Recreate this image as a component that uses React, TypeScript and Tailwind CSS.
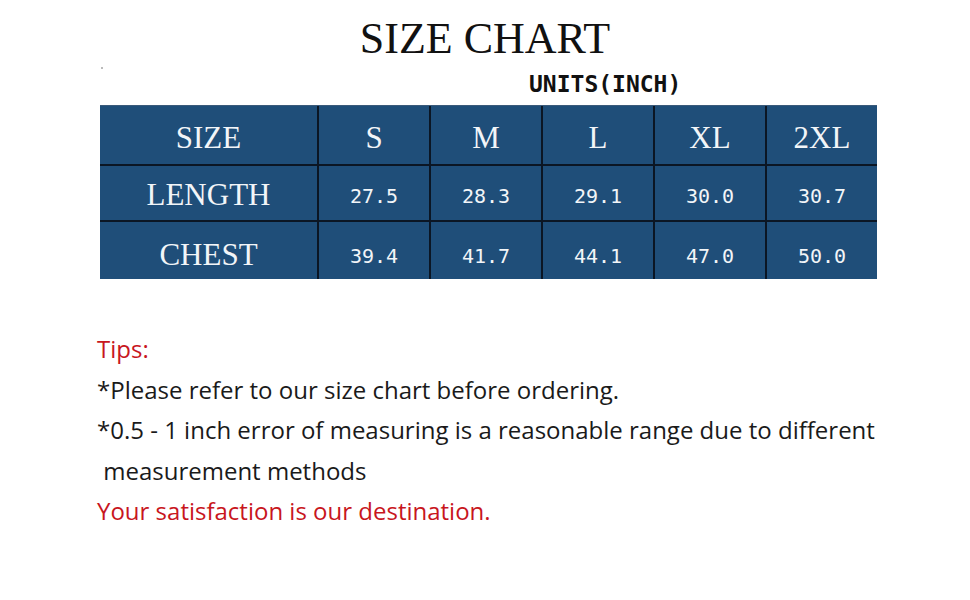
import React from "react";

const serif = { fontFamily: '"Liberation Serif", "Times New Roman", serif' };
const mono = { fontFamily: '"DejaVu Sans Mono", "Liberation Mono", monospace' };
const sans = { fontFamily: '"Open Sans", "Noto Sans", sans-serif' };

const sizes = ["S", "M", "L", "XL", "2XL"];
const length = ["27.5", "28.3", "29.1", "30.0", "30.7"];
const chest = ["39.4", "41.7", "44.1", "47.0", "50.0"];

function Row({
  label,
  values,
  h,
  pt,
  labelClass,
  valueClass,
  valueFont,
}: {
  label: string;
  values: string[];
  h: string;
  pt: string;
  labelClass: string;
  valueClass: string;
  valueFont: React.CSSProperties;
}) {
  return (
    <>
      <div className={`bg-[#1f4e79] flex items-center justify-center text-[#f2f5f8] ${h} ${pt} ${labelClass}`} style={serif}>
        {label}
      </div>
      {values.map((v) => (
        <div
          key={v}
          className={`bg-[#1f4e79] flex items-center justify-center text-[#f2f5f8] ${h} ${pt} ${valueClass}`}
          style={valueFont}
        >
          {v}
        </div>
      ))}
    </>
  );
}

export default function App() {
  return (
    <div className="w-[970px] h-[600px] bg-white overflow-hidden flex flex-col">
      <div className="flex justify-center pt-[14px] h-[70px]">
        <span className="text-[44px] leading-[50px] text-[#111]" style={serif}>
          SIZE CHART
        </span>
      </div>
      <div className="pl-[100px] flex flex-col">
        <div className="flex items-start h-[35px]">
          <span className="w-[2px] h-[2px] bg-[#bbb] mt-[-3px] ml-[1px]" />
          <span className="ml-[426px] text-[23px] leading-[24px] font-bold text-[#111] pt-[2px]" style={mono}>
            UNITS(INCH)
          </span>
        </div>
        <div className="grid grid-cols-[217px_repeat(5,110px)] gap-[2px] bg-[#0b1624] w-[777px] border-t border-[#3a5a7a]">
          <Row label="SIZE" values={sizes} h="h-[58px]" pt="pt-[6px]" labelClass="text-[31px]" valueClass="text-[31px]" valueFont={serif} />
          <Row label="LENGTH" values={length} h="h-[54px]" pt="pt-[5px]" labelClass="text-[31px]" valueClass="text-[20px]" valueFont={mono} />
          <Row label="CHEST" values={chest} h="h-[57px]" pt="pt-[10px]" labelClass="text-[31px]" valueClass="text-[20px]" valueFont={mono} />
        </div>
      </div>
      <div className="pl-[97px] pt-[50px] text-[24px] leading-[40.5px] text-[#1a1a1a]" style={sans}>
        <div className="text-[#c8161d]">Tips:</div>
        <div>*Please refer to our size chart before ordering.</div>
        <div>*0.5 - 1 inch error of measuring is a reasonable range due to different</div>
        <div>&nbsp;measurement methods</div>
        <div className="text-[#c8161d]">Your satisfaction is our destination.</div>
      </div>
    </div>
  );
}
